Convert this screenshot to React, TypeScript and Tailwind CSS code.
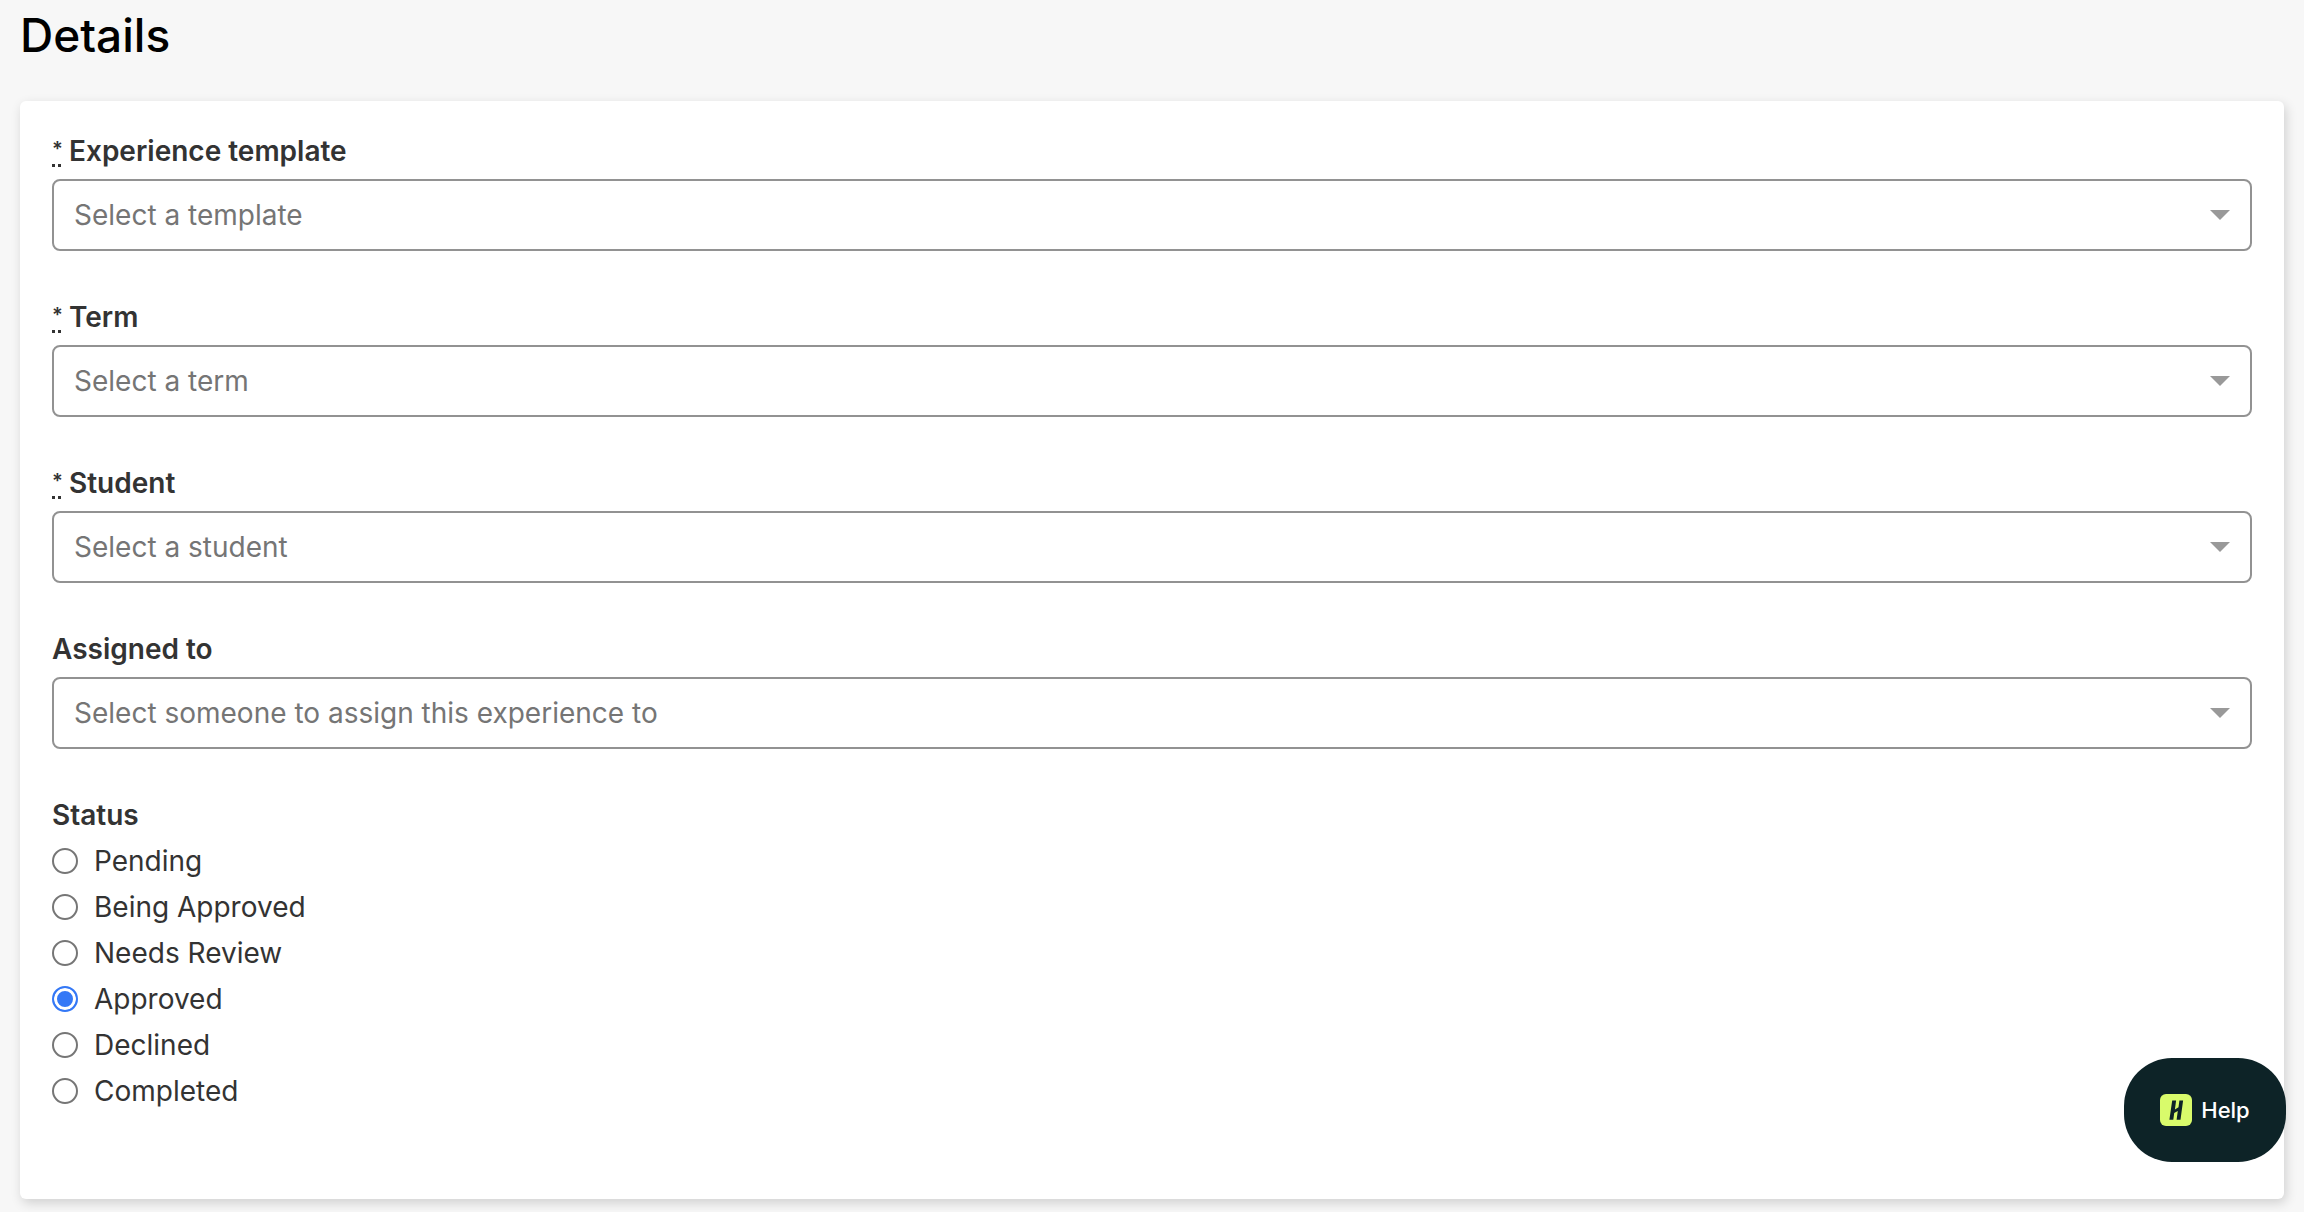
import { useId, useState } from 'react'

interface Field {
  label: string
  placeholder: string
  required?: boolean
}

const fields: Field[] = [
  { label: 'Experience template', placeholder: 'Select a template', required: true },
  { label: 'Term', placeholder: 'Select a term', required: true },
  { label: 'Student', placeholder: 'Select a student', required: true },
  { label: 'Assigned to', placeholder: 'Select someone to assign this experience to' },
]

const statuses = ['Pending', 'Being Approved', 'Needs Review', 'Approved', 'Declined', 'Completed']

function SelectField({ label, placeholder, required }: Field) {
  const id = useId()
  return (
    <div className="mb-12">
      <label htmlFor={id} className="mb-[10px] flex gap-2 font-semibold leading-9">
        {required && (
          <abbr
            title="required"
            className="mt-1 h-[30px] w-[9px] border-b-3 border-dotted border-[#333] text-xl leading-6 no-underline"
          >
            *
          </abbr>
        )}
        {label}
      </label>
      <div className="relative">
        <select
          id={id}
          defaultValue=""
          className="block h-[72px] w-full appearance-none rounded-lg border-2 border-[#929292] bg-white pl-5 pr-16 text-[#757575]"
        >
          <option value="">{placeholder}</option>
        </select>
        {/* Caret */}
        <svg
          viewBox="0 0 20 10"
          className="pointer-events-none absolute right-[22px] top-[31px] h-[10px] w-5 fill-[#999]"
          aria-hidden="true"
        >
          <path d="M0 0h20L10 10z" />
        </svg>
      </div>
    </div>
  )
}

function HelpButton() {
  return (
    <button
      type="button"
      className="fixed bottom-[50px] right-[18px] flex h-[104px] min-w-[162px] items-center justify-center gap-[9px] rounded-[48px] bg-[#0d2327] px-9 text-[22px] font-medium text-white"
    >
      <svg viewBox="0 0 32 32" className="size-8" aria-hidden="true">
        <rect width="32" height="32" rx="6" fill="#d9fb6b" />
        <path
          d="M12.2 6.5h3.9l-1.2 9 3.6-2.2.9-6.8h3.7l-2.6 19.2h-3.9l1.2-8.8-3.6 2.2-.9 6.6H9.4z"
          fill="#0d2327"
        />
      </svg>
      Help
    </button>
  )
}

export default function App() {
  const [status, setStatus] = useState('Approved')

  return (
    <div className="min-h-screen bg-[#f7f7f7] px-5 pb-[13px] font-[Inter,sans-serif] text-[28px] text-[#333]">
      <h1 className="pb-[31px] text-[46px] font-medium leading-[70px] text-black">Details</h1>

      <main className="rounded-md bg-white px-8 pb-[85px] pt-8 shadow-[2px_4px_12px_rgba(0,0,0,0.16)]">
        {fields.map((field) => (
          <SelectField key={field.label} {...field} />
        ))}

        <fieldset>
          <legend className="mb-[5px] font-semibold leading-9">Status</legend>
          {statuses.map((name) => (
            <label key={name} className="flex h-[46px] items-center gap-4">
              <input
                type="radio"
                name="status"
                value={name}
                checked={status === name}
                onChange={() => setStatus(name)}
                className="size-[26px] appearance-none rounded-full border-2 border-[#767676] bg-white checked:border-[#3478f6] checked:bg-[#3478f6] checked:shadow-[inset_0_0_0_3px_white]"
              />
              {name}
            </label>
          ))}
        </fieldset>
      </main>

      <HelpButton />
    </div>
  )
}
